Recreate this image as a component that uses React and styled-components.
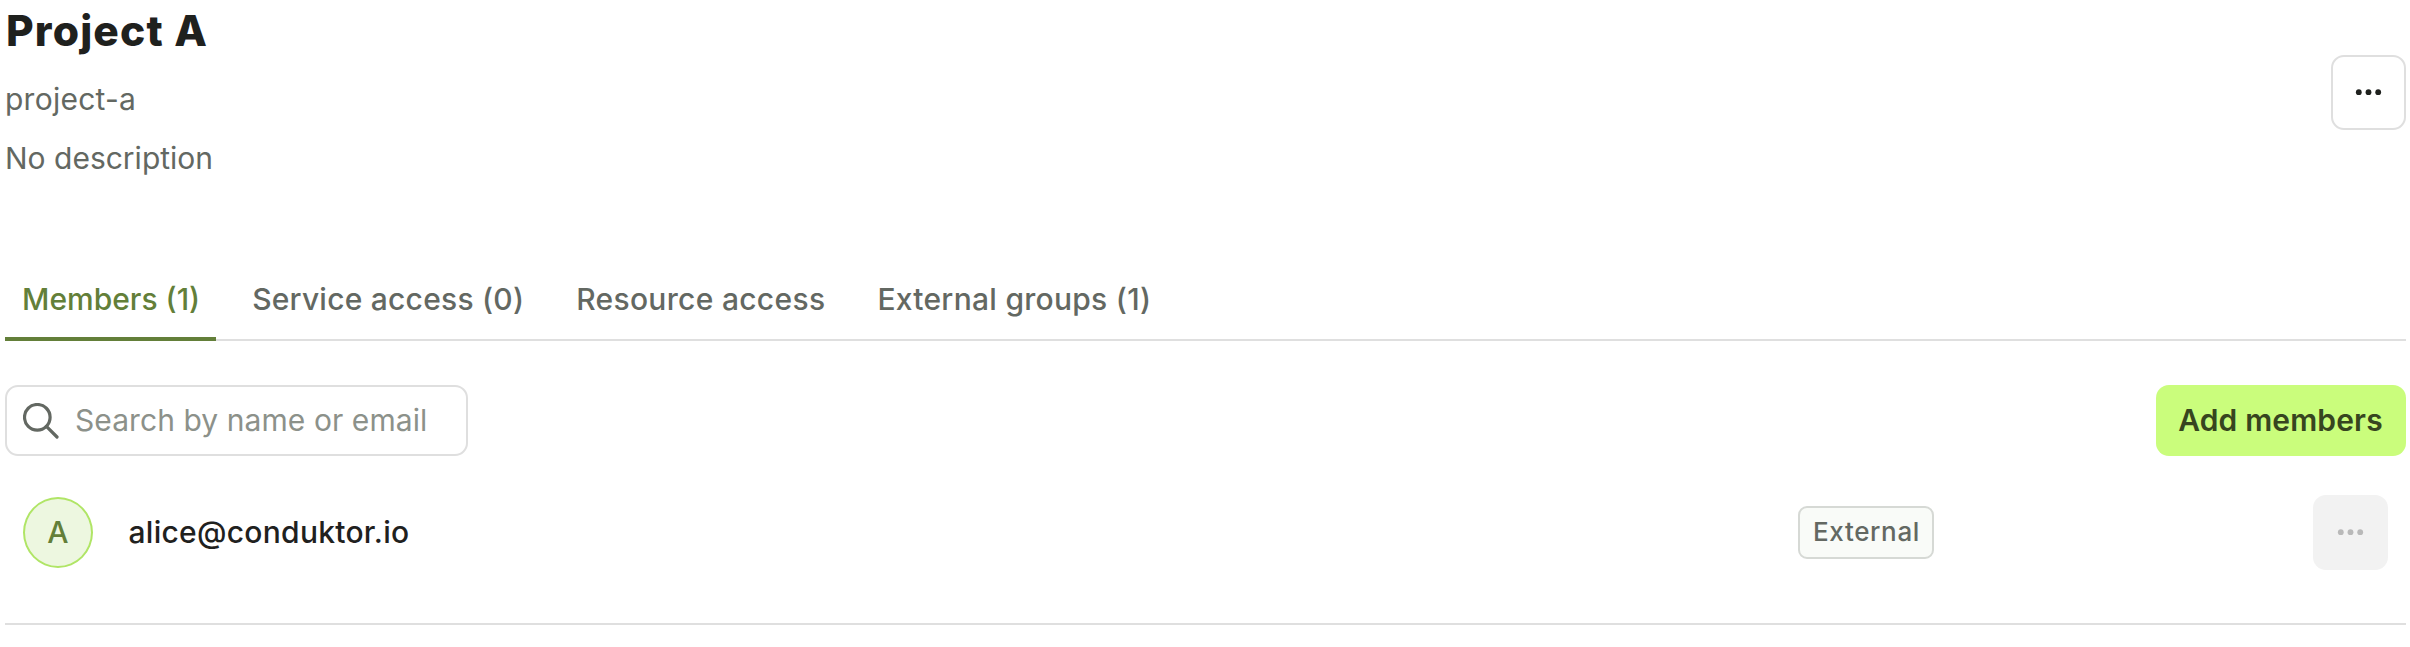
import React from 'react';
import styled, { createGlobalStyle } from 'styled-components';

const GlobalStyle = createGlobalStyle`
  *, *::before, *::after { box-sizing: border-box; }
  body {
    margin: 0;
    background: #fff;
    color: #1f211e;
    font-family: Inter, "Liberation Sans", sans-serif;
    font-size: 30px;
  }
  button, input { font: inherit; color: inherit; margin: 0; }
`;

const Page = styled.main`
  min-height: 647px;
  padding: 0 4px 0 5px;
`;

const Header = styled.header`
  display: flex;
  align-items: center;
  justify-content: space-between;
  height: 185px;
`;

const Heading = styled.div`
  display: flex;
  flex-direction: column;
  align-self: flex-start;
  padding-top: 1px;
`;

const Title = styled.h1`
  margin: 0 0 16px;
  padding-left: 1px;
  font-size: 42.5px;
  font-weight: 800;
  line-height: 60px;
  letter-spacing: 1.15px;
`;

const Detail = styled.p`
  margin: 0 0 15px;
  line-height: 44px;
  letter-spacing: ${({ $spacing }) => $spacing}px;
  color: #636862;
`;

const MoreButton = styled.button`
  display: grid;
  place-items: center;
  width: 75px;
  height: 75px;
  padding: 0;
  border: 2px solid #dfdfdf;
  border-radius: 13px;
  background: #fff;

  &:disabled {
    border-color: #f2f2f2;
    background: #f2f2f2;
    color: #b9b9b9;
  }
`;

const Tabs = styled.nav`
  display: flex;
  gap: 19px;
  height: 84px;
  margin-top: 72px;
  box-shadow: inset 0 -2px #dfdfdf;
`;

const Tab = styled.button`
  padding: 4px 16px 0 17px;
  border: 0;
  border-bottom: 4px solid ${({ $active }) => ($active ? '#637f39' : 'transparent')};
  background: none;
  color: ${({ $active }) => ($active ? '#637f39' : '#636862')};
  font-weight: 500;
  line-height: 76px;
  letter-spacing: ${({ $spacing }) => $spacing}px;
  white-space: nowrap;
`;

const Toolbar = styled.div`
  display: flex;
  align-items: center;
  justify-content: space-between;
  height: 71px;
  margin-top: 44px;
`;

const SearchBox = styled.label`
  display: flex;
  align-items: center;
  gap: 16px;
  width: 463px;
  height: 71px;
  padding: 0 16px;
  border: 2px solid #dfdfdf;
  border-radius: 13px;
  color: #636862;
`;

const SearchInput = styled.input`
  flex: 1;
  min-width: 0;
  padding: 0 0 2px;
  border: 0;
  outline: 0;
  background: none;
  line-height: 40px;
  letter-spacing: 0.07px;

  &::placeholder { color: #8c918a; opacity: 1; }
`;

const PrimaryButton = styled.button`
  width: 250px;
  height: 71px;
  padding: 0 1px 2px 0;
  border: 0;
  border-radius: 13px;
  background: #cafd7c;
  color: #37451f;
  font-weight: 600;
  letter-spacing: 0.15px;
`;

const MemberRow = styled.div`
  display: grid;
  grid-template-columns: 105.5px 1669.5px 1fr 75px;
  align-items: center;
  height: 169px;
  padding: 2px 18px 17px;
  border-bottom: 2px solid #dfdfdf;
`;

const Avatar = styled.div`
  display: grid;
  place-items: center;
  width: 70px;
  height: 71px;
  border: 2px solid #b0e566;
  border-radius: 50%;
  background: #edf7e0;
  color: #637f39;
  font-weight: 500;
`;

const Email = styled.span`
  font-weight: 500;
  letter-spacing: 0.28px;
`;

const Badge = styled.span`
  justify-self: start;
  width: 136px;
  height: 53px;
  padding-left: 1px;
  border: 2px solid #d6d9d5;
  border-radius: 9px;
  background: #f9fbf8;
  color: #636862;
  font-size: 26px;
  font-weight: 500;
  line-height: 48px;
  letter-spacing: 0.65px;
  text-align: center;
`;

const MoreIcon = () => (
  <svg width="31" height="11" viewBox="0 0 31 11" fill="currentColor" aria-hidden="true">
    <circle cx="5.8" cy="5.2" r="2.9" />
    <circle cx="15.5" cy="5.2" r="2.9" />
    <circle cx="25.2" cy="5.2" r="2.9" />
  </svg>
);

const SearchIcon = () => (
  <svg width="36" height="36" viewBox="0 0 36 36" fill="none" stroke="currentColor" strokeWidth="3.2" aria-hidden="true">
    <circle cx="14.3" cy="14.3" r="12.8" />
    <path d="M23.4 23.4 34 34" strokeLinecap="round" />
  </svg>
);

const tabs = [
  { label: 'Members (1)', spacing: 0, active: true },
  { label: 'Service access (0)', spacing: 0.23 },
  { label: 'Resource access', spacing: 0.31 },
  { label: 'External groups (1)', spacing: 0.28 },
];

export default function App() {
  return (
    <>
      <GlobalStyle />
      <Page>
        <Header>
          <Heading>
            <Title>Project A</Title>
            <Detail $spacing={0.25}>project-a</Detail>
            <Detail $spacing={0}>No description</Detail>
          </Heading>
          <MoreButton aria-label="Project actions"><MoreIcon /></MoreButton>
        </Header>
        <Tabs>
          {tabs.map((tab) => (
            <Tab key={tab.label} $active={tab.active} $spacing={tab.spacing}>{tab.label}</Tab>
          ))}
        </Tabs>
        <Toolbar>
          <SearchBox>
            <SearchIcon />
            <SearchInput placeholder="Search by name or email" />
          </SearchBox>
          <PrimaryButton>Add members</PrimaryButton>
        </Toolbar>
        <MemberRow>
          <Avatar>A</Avatar>
          <Email>alice@conduktor.io</Email>
          <Badge>External</Badge>
          <MoreButton disabled aria-label="Member actions"><MoreIcon /></MoreButton>
        </MemberRow>
      </Page>
    </>
  );
}
